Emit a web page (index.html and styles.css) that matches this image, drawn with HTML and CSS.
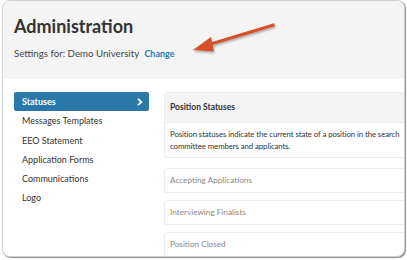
FILE: index.html
```html
<!DOCTYPE html>
<html>
<head>
<meta charset="utf-8">
<link rel="stylesheet" href="styles.css">
</head>
<body>
<div class="window">
  <header class="head">
    <h1 class="title">Administration</h1>
    <p class="settings">Settings for: Demo University <a class="change">Change</a></p>
  </header>
  <div class="content">
    <nav class="side">
      <div class="item active"><span>Statuses</span>
        <svg class="chev" width="6" height="8" viewBox="0 0 6 8"><path d="M1 0.8 L4.4 4 L1 7.2" fill="none" stroke="#fff" stroke-width="1.8"/></svg>
      </div>
      <div class="item">Messages Templates</div>
      <div class="item">EEO Statement</div>
      <div class="item">Application Forms</div>
      <div class="item">Communications</div>
      <div class="item">Logo</div>
    </nav>
    <main class="main">
      <section class="panel">
        <div class="panel-head">Position Statuses</div>
        <div class="panel-body">Position statuses indicate the current state of a position in the search<br>committee members and applicants.</div>
      </section>
      <div class="status first">Accepting Applications</div>
      <div class="status">Interviewing Finalists</div>
      <div class="status">Position Closed</div>
    </main>
  </div>
  <svg class="arrow" width="407" height="70" viewBox="0 0 407 70">
    <defs>
      <filter id="sh" x="-20%" y="-50%" width="140%" height="200%">
        <feDropShadow dx="0.5" dy="1.5" stdDeviation="1" flood-color="#000" flood-opacity="0.35"/>
      </filter>
    </defs>
    <g filter="url(#sh)" fill="#d4512b">
      <path d="M274 23.2 L275 26.2 L208 46.5 L207 43.5 Z"/>
      <path d="M193 50 L211 37 L214 51.5 Z"/>
    </g>
  </svg>
</div>
</body>
</html>
```

FILE: styles.css
```css
html, body {
  margin: 0;
  padding: 0;
  background: #fff;
}
body {
  font-family: "Lato", "Open Sans", sans-serif;
  color: #333;
  width: 407px;
  height: 260px;
  overflow: hidden;
}
.window {
  position: relative;
  margin-left: 2px;
  width: 401px;
  height: 255px;
  border: 1px solid #cfcfcf;
  border-radius: 8px;
  overflow: hidden;
  box-shadow: 1px 1px 1px rgba(0,0,0,0.45);
  background: #fff;
}
.head {
  background: #f4f4f4;
  height: 78px;
  padding: 14px 0 0 11px;
  box-sizing: border-box;
}
.title {
  margin: 0;
  font-size: 18px;
  font-weight: 700;
  color: #333;
  line-height: 22px;
}
.settings {
  margin: 10px 0 0;
  font-size: 9.7px;
  color: #444;
  line-height: 12px;
}
.change {
  color: #2b7bb3;
  font-size: 9px;
  font-weight: 700;
  margin-left: 3px;
}
.content {
  display: flex;
  padding: 13px 0 0 11px;
  gap: 15px;
}
.side {
  width: 135px;
  flex: none;
}
.item {
  height: 19.3px;
  line-height: 19px;
  font-size: 9px;
  padding-left: 8px;
  color: #333;
}
.item.active {
  background: #2a78aa;
  color: #fff;
  font-weight: 700;
  border-radius: 2px;
  display: flex;
  align-items: center;
  justify-content: space-between;
  padding-right: 6px;
}
.chev {
  display: block;
}
.main {
  width: 330px;
  flex: none;
  display: flex;
  flex-direction: column;
  gap: 7px;
}
.panel {
  border: 1px solid #ececec;
  border-radius: 3px;
}
.panel-head {
  background: #f4f4f4;
  height: 29px;
  line-height: 29px;
  padding-left: 5px;
  font-size: 8.5px;
  font-weight: 700;
  color: #333;
  border-bottom: 1px solid #ececec;
}
.panel-body {
  padding: 5px 5px 5px;
  font-size: 7.8px;
  letter-spacing: -0.08px;
  line-height: 12px;
  color: #333;
  white-space: nowrap;
}
.status {
  border: 1px solid #ececec;
  border-radius: 3px;
  height: 23px;
  line-height: 23px;
  padding-left: 5px;
  font-size: 8.2px;
  color: #888;
}
.status.first {
  margin-top: 3px;
}
.arrow {
  position: absolute;
  left: -3px;
  top: -1px;
  pointer-events: none;
}
```
